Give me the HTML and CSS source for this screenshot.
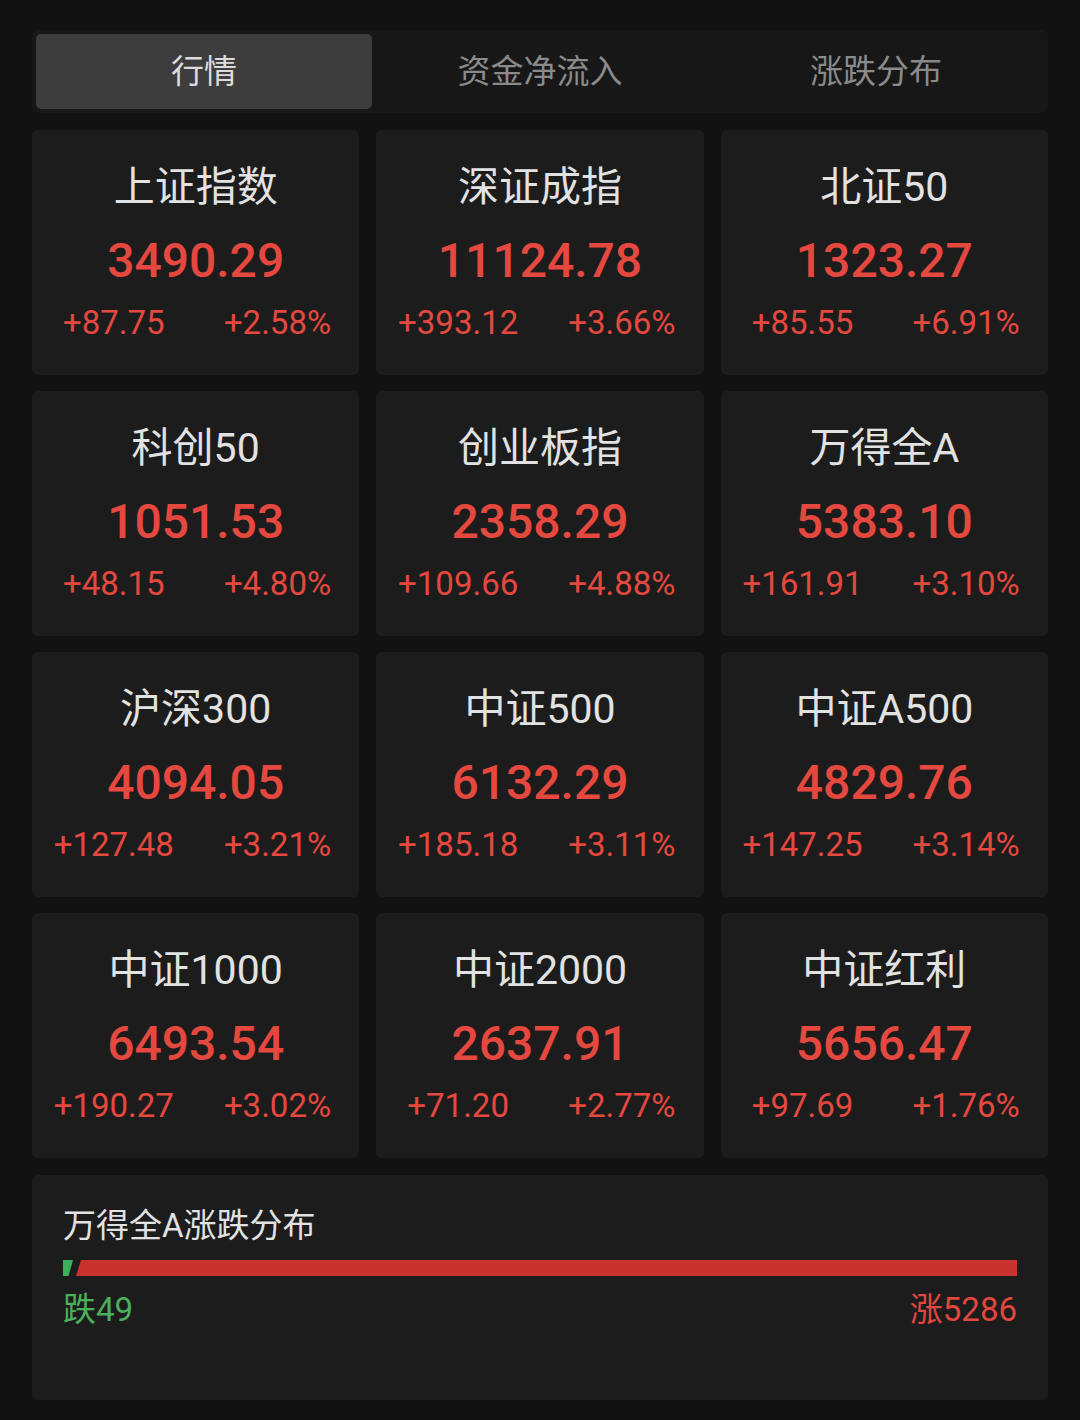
FILE: index.html
```html
<!DOCTYPE html>
<html lang="zh-CN">
<head>
<meta charset="utf-8">
<link rel="stylesheet" href="styles.css">
</head>
<body>
<div class="page">
  <div class="tabs">
    <div class="tab active">行情</div>
    <div class="tab">资金净流入</div>
    <div class="tab">涨跌分布</div>
  </div>
  <div class="grid">
    <div class="card"><div class="name">上证指数</div><div class="val">3490.29</div><div class="chg"><span>+87.75</span><span>+2.58%</span></div></div>
    <div class="card"><div class="name">深证成指</div><div class="val">11124.78</div><div class="chg"><span>+393.12</span><span>+3.66%</span></div></div>
    <div class="card"><div class="name">北证50</div><div class="val">1323.27</div><div class="chg"><span>+85.55</span><span>+6.91%</span></div></div>
    <div class="card"><div class="name">科创50</div><div class="val">1051.53</div><div class="chg"><span>+48.15</span><span>+4.80%</span></div></div>
    <div class="card"><div class="name">创业板指</div><div class="val">2358.29</div><div class="chg"><span>+109.66</span><span>+4.88%</span></div></div>
    <div class="card"><div class="name">万得全A</div><div class="val">5383.10</div><div class="chg"><span>+161.91</span><span>+3.10%</span></div></div>
    <div class="card"><div class="name">沪深300</div><div class="val">4094.05</div><div class="chg"><span>+127.48</span><span>+3.21%</span></div></div>
    <div class="card"><div class="name">中证500</div><div class="val">6132.29</div><div class="chg"><span>+185.18</span><span>+3.11%</span></div></div>
    <div class="card"><div class="name">中证A500</div><div class="val">4829.76</div><div class="chg"><span>+147.25</span><span>+3.14%</span></div></div>
    <div class="card"><div class="name">中证1000</div><div class="val">6493.54</div><div class="chg"><span>+190.27</span><span>+3.02%</span></div></div>
    <div class="card"><div class="name">中证2000</div><div class="val">2637.91</div><div class="chg"><span>+71.20</span><span>+2.77%</span></div></div>
    <div class="card"><div class="name">中证红利</div><div class="val">5656.47</div><div class="chg"><span>+97.69</span><span>+1.76%</span></div></div>
  </div>
  <div class="dist">
    <div class="dist-title">万得全A涨跌分布</div>
    <div class="bar">
      <div class="bar-down"></div>
      <div class="bar-up"></div>
    </div>
    <div class="labels">
      <span class="down">跌49</span>
      <span class="up">涨5286</span>
    </div>
  </div>
</div>
</body>
</html>
```

FILE: styles.css
```css
html, body {
  margin: 0;
  padding: 0;
  background: #121212;
}
body {
  font-family: Roboto, "Noto Sans CJK SC", "Noto Sans", sans-serif;
  color: #e4e4e4;
}
.page {
  width: 1080px;
  height: 1420px;
  box-sizing: border-box;
  padding: 30px 32px 0 32px;
}
.tabs {
  display: flex;
  background: #171717;
  border-radius: 6px;
  padding: 4px;
  height: 83px;
  box-sizing: border-box;
}
.tab {
  flex: 1;
  display: flex;
  align-items: center;
  justify-content: center;
  font-size: 33px;
  color: #8a8a8a;
  border-radius: 5px;
  padding-bottom: 5px;
}
.tab.active {
  background: #3d3d3d;
  color: #dcdcdc;
}
.grid {
  margin-top: 17px;
  display: grid;
  grid-template-columns: repeat(3, 1fr);
  column-gap: 17px;
  row-gap: 16px;
}
.card {
  height: 245px;
  background: #1c1c1c;
  border-radius: 6px;
  display: flex;
  flex-direction: column;
  align-items: center;
  box-sizing: border-box;
  padding-top: 33px;
}
.name {
  font-size: 41px;
  line-height: 48px;
  color: #e2e2e2;
}
.val {
  margin-top: 22px;
  font-size: 48px;
  line-height: 56px;
  font-weight: 500;
  color: #e5483f;
}
.chg {
  margin-top: 14px;
  width: 100%;
  display: flex;
  font-size: 33px;
  line-height: 40px;
  color: #e5483f;
}
.chg span {
  flex: 1;
  text-align: center;
}
.dist {
  margin-top: 17px;
  height: 225px;
  background: #1c1c1c;
  border-radius: 6px;
  box-sizing: border-box;
  padding: 32px 31px 0 31px;
}
.dist-title {
  font-size: 33px;
  line-height: 38px;
  color: #e2e2e2;
}
.bar {
  margin-top: 15px;
  height: 16px;
  display: flex;
}
.bar-down {
  width: 10px;
  background: #3fae5a;
  clip-path: polygon(0 0, 100% 0, 55% 100%, 0 100%);
}
.bar-up {
  flex: 1;
  background: #c9332e;
  clip-path: polygon(12px 0, 100% 0, 100% 100%, 7px 100%);
  margin-left: -4px;
}
.labels {
  margin-top: 15px;
  display: flex;
  justify-content: space-between;
  font-size: 33px;
  line-height: 38px;
}
.down {
  color: #4caf5c;
}
.up {
  color: #e0473e;
}
```
